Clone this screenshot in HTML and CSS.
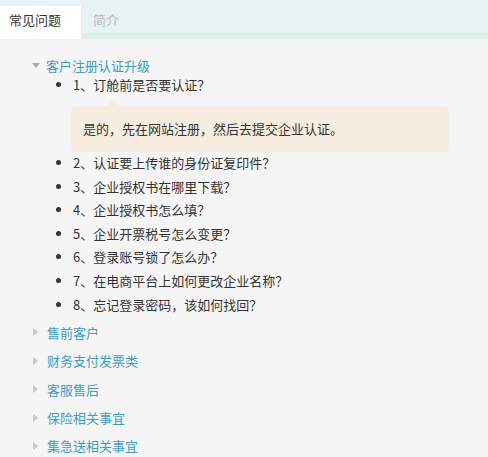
FILE: index.html
```html
<!DOCTYPE html>
<html lang="zh-CN">
<head>
    <meta charset="UTF-8">
    <title>常见问题</title>
    <link rel="stylesheet" href="styles.css">
</head>
<body>
    <div class="tabs">
        <div class="tab active">常见问题</div>
        <div class="tab">简介</div>
    </div>

    <div class="content">
        <ul class="cats">
            <li class="cat open">
                <div class="cat-title"><span class="arrow"></span>客户注册认证升级</div>
                <ul class="questions">
                    <li>
                        1、订舱前是否要认证？
                        <div class="answer">是的，先在网站注册，然后去提交企业认证。</div>
                    </li>
                    <li>2、认证要上传谁的身份证复印件？</li>
                    <li>3、企业授权书在哪里下载？</li>
                    <li>4、企业授权书怎么填？</li>
                    <li>5、企业开票税号怎么变更？</li>
                    <li>6、登录账号锁了怎么办？</li>
                    <li>7、在电商平台上如何更改企业名称？</li>
                    <li>8、忘记登录密码，该如何找回？</li>
                </ul>
            </li>
            <li class="cat"><div class="cat-title"><span class="arrow"></span>售前客户</div></li>
            <li class="cat"><div class="cat-title"><span class="arrow"></span>财务支付发票类</div></li>
            <li class="cat"><div class="cat-title"><span class="arrow"></span>客服售后</div></li>
            <li class="cat"><div class="cat-title"><span class="arrow"></span>保险相关事宜</div></li>
            <li class="cat"><div class="cat-title"><span class="arrow"></span>集急送相关事宜</div></li>
        </ul>
    </div>
</body>
</html>
```

FILE: styles.css
```css
* {
    margin: 0;
    padding: 0;
    box-sizing: border-box;
}

body {
    background: #f5f5f5;
    font-family: "Noto Sans CJK SC", "Noto Sans", sans-serif;
    font-size: 13px;
    color: #333;
}

.tabs {
    display: flex;
    height: 39px;
    padding-top: 6px;
    background: #e6f2f3;
    border-bottom: 6px solid #dcefe9;
    box-shadow: 0 1px 0 #eef6f3;
}

.tab {
    width: 83px;
    padding-left: 9px;
    line-height: 27px;
    color: #bbb;
}

.tab.active {
    background: #fff;
    color: #333;
    border-right: 2px solid #e9eeee;
    margin-bottom: -6px;
    height: 33px;
}

.tab + .tab {
    padding-left: 10px;
}

.content {
    padding: 12px 0 0 32px;
}

.cats {
    list-style: none;
}

.cat-title {
    display: flex;
    align-items: center;
    height: 28.4px;
    color: #3d9cc0;
}

.arrow {
    width: 14px;
    height: 0;
    border-style: solid;
    border-color: transparent;
}

.cat .arrow {
    width: 0;
    margin-right: 9px;
    margin-left: 1px;
    border-width: 4.5px 0 4.5px 5px;
    border-left-color: #c9c9c9;
}

.cat.open .arrow {
    margin-left: 0;
    margin-right: 6px;
    border-width: 5px 4.5px 0 4.5px;
    border-color: #aaa transparent transparent transparent;
}

.questions {
    padding-left: 41px;
    margin-top: -6px;
    margin-bottom: 2px;
    list-style: disc;
}

.questions li {
    line-height: 23.6px;
}

.answer {
    position: relative;
    width: 376px;
    margin: 10px 0 0 -1px;
    padding: 10px 11px;
    line-height: 24px;
    background: #f6ecdf;
    border-radius: 4px;
    box-shadow: 0 0 2px rgba(0, 0, 0, 0.08);
}

.answer::before {
    content: "";
    position: absolute;
    top: -8px;
    left: 34px;
    border-style: solid;
    border-width: 0 7px 8px 7px;
    border-color: transparent transparent #f6ecdf transparent;
}
```
